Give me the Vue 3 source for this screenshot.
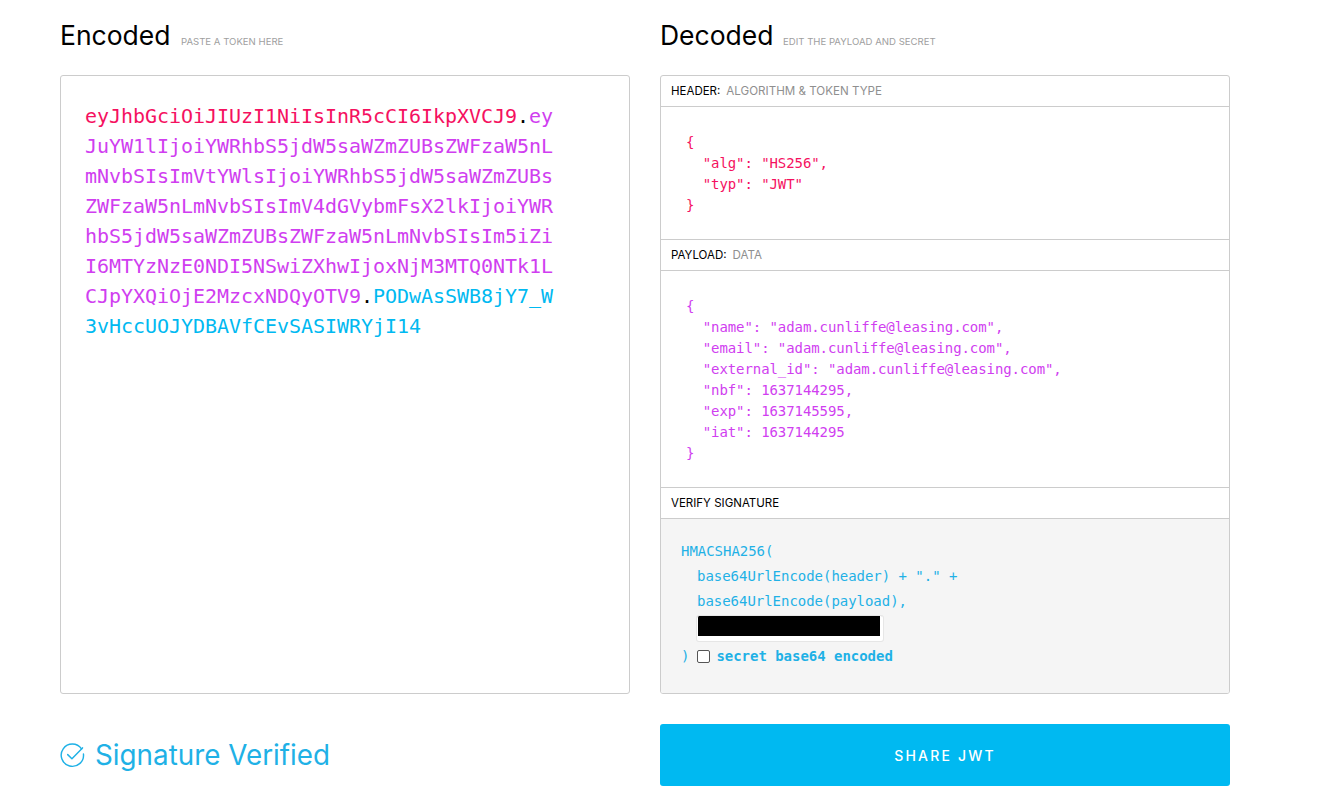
<script setup>
const headerJson = `{
  "alg": "HS256",
  "typ": "JWT"
}`
const payloadJson = `{
  "name": "adam.cunliffe@leasing.com",
  "email": "adam.cunliffe@leasing.com",
  "external_id": "adam.cunliffe@leasing.com",
  "nbf": 1637144295,
  "exp": 1637145595,
  "iat": 1637144295
}`
</script>

<template>
  <main class="page">
    <section class="col">
      <h2 class="title">Encoded <small>PASTE A TOKEN HERE</small></h2>
      <div class="box encoded">
        <div class="token"><span class="red">eyJhbGciOiJIUzI1NiIsInR5cCI6IkpXVCJ9</span>.<span class="purple">eyJuYW1lIjoiYWRhbS5jdW5saWZmZUBsZWFzaW5nLmNvbSIsImVtYWlsIjoiYWRhbS5jdW5saWZmZUBsZWFzaW5nLmNvbSIsImV4dGVybmFsX2lkIjoiYWRhbS5jdW5saWZmZUBsZWFzaW5nLmNvbSIsIm5iZiI6MTYzNzE0NDI5NSwiZXhwIjoxNjM3MTQ0NTk1LCJpYXQiOjE2MzcxNDQyOTV9</span>.<span class="blue">PODwAsSWB8jY7_W3vHccUOJYDBAVfCEvSASIWRYjI14</span></div>
      </div>
      <div class="foot verified">
        <svg class="check" width="25" height="26" viewBox="0 0 26 26" fill="none" stroke="#1fb1e6" stroke-width="1.5" stroke-linecap="round" stroke-linejoin="round">
          <path d="M22.4 6.6A11.6 11.6 0 1 0 24.4 12" />
          <path d="M8 12.6l4.4 4.4L23.4 5.6" />
        </svg>
        <span>Signature Verified</span>
      </div>
    </section>

    <section class="col">
      <h2 class="title">Decoded <small class="dec-sub">EDIT THE PAYLOAD AND SECRET</small></h2>
      <div class="box decoded">
        <div class="bar">HEADER:<span>ALGORITHM &amp; TOKEN TYPE</span></div>
        <pre class="json red header-json">{{ headerJson }}</pre>
        <div class="bar">PAYLOAD:<span>DATA</span></div>
        <pre class="json purple payload-json">{{ payloadJson }}</pre>
        <div class="bar">VERIFY SIGNATURE</div>
        <div class="verify">
          <div>HMACSHA256(</div>
          <div class="ind">base64UrlEncode(header) + "." +</div>
          <div class="ind">base64UrlEncode(payload),</div>
          <div class="ind secret"><span class="secret-fill"></span></div>
          <div class="close">
            <span>)</span>
            <span class="cb"></span>
            <b>secret base64 encoded</b>
          </div>
        </div>
      </div>
      <div class="foot">
        <button class="share">SHARE JWT</button>
      </div>
    </section>
  </main>
</template>

<style>
html, body { margin: 0; background: #fff; overflow: hidden; }
</style>

<style scoped>
.page {
  display: flex;
  gap: 30px;
  padding: 0 60px;
  height: 801px;
  box-sizing: border-box;
  font-family: Inter, "Liberation Sans", sans-serif;
}
.col { width: 570px; flex: none; }
.title {
  margin: 0;
  height: 75px;
  padding-top: 18px;
  box-sizing: border-box;
  font-size: 26.5px;
  line-height: 34px;
  font-weight: 400;
  color: #000;
}
.title small {
  font-size: 9.6px;
  color: #a0a0a0;
  margin-left: 3px;
}
.title .dec-sub { margin-left: 2px; }
.box {
  height: 619px;
  box-sizing: border-box;
  border: 1px solid #cccccc;
  border-radius: 3px;
  overflow: hidden;
}
.encoded { padding: 25px 24px; }
.token {
  width: 470px;
  font-family: "DejaVu Sans Mono", monospace;
  font-size: 20px;
  line-height: 30px;
  letter-spacing: -0.04px;
  word-break: break-all;
  color: #000;
}
.red { color: #f5115f; }
.purple { color: #d03ef0; }
.blue { color: #00b9f1; }
.decoded { display: flex; flex-direction: column; }
.bar {
  height: 31px;
  flex: none;
  box-sizing: border-box;
  padding-left: 10px;
  font-size: 11.5px;
  line-height: 30px;
  color: #000;
  border-bottom: 1px solid #cccccc;
}
.bar span { color: #8f8f8f; margin-left: 6px; font-size: 11.6px; }
.json {
  margin: 0;
  padding: 25px 25px 0;
  box-sizing: border-box;
  font-family: "DejaVu Sans Mono", monospace;
  font-size: 14px;
  letter-spacing: -0.08px;
  line-height: 21px;
  border-bottom: 1px solid #cccccc;
}
.header-json { height: 133px; }
.payload-json { height: 217px; }
.verify {
  flex: 1;
  background: #f5f5f5;
  padding: 20px 20px 0;
  font-family: "DejaVu Sans Mono", monospace;
  font-size: 14px;
  letter-spacing: -0.03px;
  line-height: 25px;
  color: #1fb1e6;
}
.ind { padding-left: 16px; }
.secret { height: 30px; padding-top: 2px; box-sizing: border-box; }
.secret-fill {
  display: block;
  width: 186px;
  height: 25px;
  box-sizing: border-box;
  background: #000;
  border: solid #fff;
  border-width: 0 3px 5px 1px;
  border-radius: 2px;
  box-shadow: 0 0 0 1px #e6e6e6;
}
.close { display: flex; align-items: center; height: 25px; }
.cb {
  width: 13px;
  height: 13px;
  margin: 0 6px 0 8px;
  box-sizing: border-box;
  background: #fff;
  border: 1px solid #555;
  border-radius: 2px;
}
.close b { font-weight: 700; }
.foot { margin-top: 30px; height: 62px; }
.verified {
  display: flex;
  align-items: center;
  gap: 10px;
  font-size: 27.8px;
  color: #1fb1e6;
}
.share {
  display: block;
  width: 100%;
  height: 62px;
  border: 0;
  border-radius: 3px;
  background: #00b9f1;
  color: #fff;
  font-family: inherit;
  font-size: 14px;
  letter-spacing: 2.2px;
  font-weight: 500;
}
</style>
